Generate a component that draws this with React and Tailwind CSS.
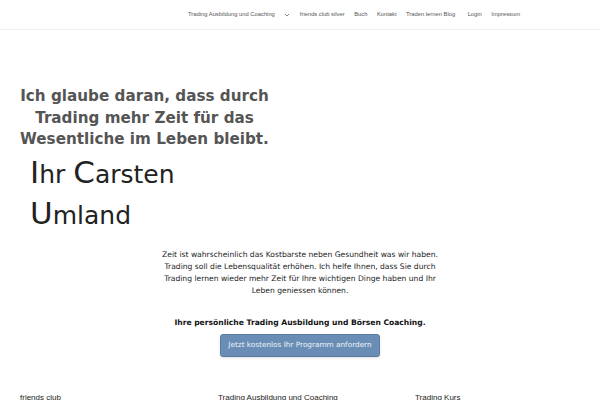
import React from 'react';

const navItems = ['friends club silver', 'Buch', 'Kontakt', 'Traden lernen Blog'];

export default function App() {
  return (
    <div className="w-[600px] h-[400px] overflow-hidden bg-white font-['DejaVu_Sans',sans-serif]">
      {/* Header */}
      <div className="h-[30px] border-b border-[#f0f0f0] flex items-center justify-end pr-[80px] font-['Liberation_Sans',Arial,sans-serif] text-[5.8px] text-[#555]">
        <div className="flex items-center gap-[9.5px]">
          <span>Trading Ausbildung und Coaching</span>
          <svg width="6" height="4" viewBox="0 0 6 4">
            <path d="M1 1 L3 3 L5 1" fill="none" stroke="#666" strokeWidth="0.8" />
          </svg>
          {navItems.map((n) => (
            <span key={n}>{n}</span>
          ))}
          <span className="ml-[3px]">Login</span>
          <span>Impressum</span>
        </div>
      </div>

      {/* Hero */}
      <div className="pt-[56px] pl-[13px]">
        <h1 className="w-[263px] text-center text-[15.2px] leading-[21.5px] font-bold text-[#555]">
          Ich glaube daran, dass durch Trading mehr Zeit für das Wesentliche im Leben bleibt.
        </h1>
        <div className="mt-[2px] pl-[17px] text-[#222] text-[25px] leading-[38px]">
          <div><span className="text-[31px]">I</span>hr <span className="text-[31px]">C</span>arsten</div>
          <div><span className="text-[31px]">U</span>mland</div>
        </div>
      </div>

      {/* Intro */}
      <div className="mt-[14px] flex flex-col items-center text-[#222]">
        <p className="w-[287px] text-center text-[7.6px] leading-[12px]">
          Zeit ist wahrscheinlich das Kostbarste neben Gesundheit was wir haben. Trading soll die Lebensqualität erhöhen. Ich helfe Ihnen, dass Sie durch Trading lernen wieder mehr Zeit für Ihre wichtigen Dinge haben und Ihr Leben geniessen können.
        </p>
        <p className="mt-[20px] text-[7.6px] leading-[12px] font-bold text-[#111]">
          Ihre persönliche Trading Ausbildung und Börsen Coaching.
        </p>
        <button className="mt-[5px] w-[160px] h-[23px] rounded-[3px] bg-[#6a8db5] border border-[#5a7ca3] text-[#eef3f8] text-[7.3px] text-center shadow-sm whitespace-nowrap">
          Jetzt kostenlos Ihr Programm anfordern
        </button>
      </div>

      {/* Footer columns */}
      <div className="mt-[35px] flex font-['Liberation_Sans',Arial,sans-serif] text-[8px] text-[#222]">
        <div className="w-[198px] pl-[20px]">friends club</div>
        <div className="w-[197px] pl-[20px]">Trading Ausbildung und Coaching</div>
        <div className="pl-[20px]">Trading Kurs</div>
      </div>
    </div>
  );
}
